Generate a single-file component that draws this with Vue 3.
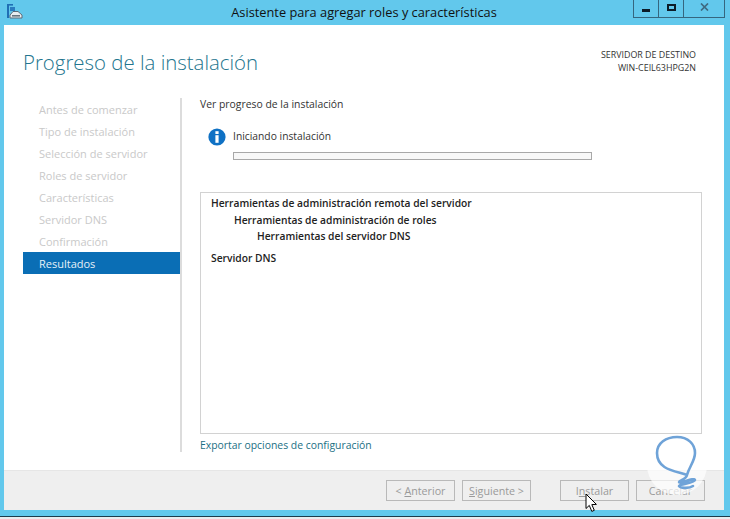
<script setup>
const steps = ['Antes de comenzar','Tipo de instalación','Selección de servidor','Roles de servidor','Características','Servidor DNS','Confirmación']
</script>

<template>
  <div class="screen">
    <div class="frame">
      <header class="titlebar">
        <svg class="appicon" width="16" height="18" viewBox="0 0 16 18">
          <rect x="0" y="0" width="6" height="1.6" fill="#1f6fb5"/>
          <rect x="0" y="0" width="2" height="14" fill="#1f6fb5"/>
          <rect x="3" y="3" width="5" height="4" fill="#2a7cc0"/>
          <path d="M3 11 L6 7.5 H11 L15 11 V14 H3 Z" fill="#e8edf0" stroke="#5c6b78" stroke-width="1"/>
          <rect x="5" y="11" width="8" height="1.6" fill="#66747f"/>
        </svg>
        <div class="title">Asistente para agregar roles y características</div>
        <div class="winbtns">
          <div class="wb"><span class="min"></span></div>
          <div class="wb"><span class="max"></span></div>
          <div class="wb close">
            <svg width="9" height="8" viewBox="0 0 9 8"><path d="M1 0.5 L8 7.5 M8 0.5 L1 7.5" stroke="#3f6a80" stroke-width="1.7"/></svg>
          </div>
        </div>
      </header>

      <div class="window">
        <div class="head">
          <h1>Progreso de la instalación</h1>
          <div class="server">
            <div>SERVIDOR DE DESTINO</div>
            <div>WIN-CEIL63HPG2N</div>
          </div>
        </div>

        <div class="body">
          <nav class="nav">
            <div v-for="s in steps" :key="s" class="step">{{ s }}</div>
            <div class="step active">Resultados</div>
          </nav>
          <main class="main">
            <div class="lead">Ver progreso de la instalación</div>
            <div class="status">
              <svg class="info" width="18" height="18" viewBox="0 0 18 18">
                <circle cx="9" cy="9" r="8.6" fill="#0f71c4"/>
                <rect x="7.4" y="3.2" width="3.2" height="2.8" fill="#fff"/>
                <rect x="7.4" y="7.2" width="3.2" height="7.6" fill="#fff"/>
              </svg>
              <div class="statusbody">
                <div class="statustext">Iniciando instalación</div>
                <div class="progress"></div>
              </div>
            </div>
            <div class="results">
              <div class="r l0">Herramientas de administración remota del servidor</div>
              <div class="r l1">Herramientas de administración de roles</div>
              <div class="r l2">Herramientas del servidor DNS</div>
              <div class="r l0 gap">Servidor DNS</div>
            </div>
            <a class="export">Exportar opciones de configuración</a>
          </main>
        </div>

        <footer class="footer">
          <button class="btn"><span>&lt; <u>A</u>nterior</span></button>
          <button class="btn"><span><u>S</u>iguiente &gt;</span></button>
          <button class="btn install"><span>I<u>n</u>stalar</span></button>
          <button class="btn"><span>Cancelar</span></button>
        </footer>
      </div>
    </div>

    <svg class="logo" width="62" height="62" viewBox="0 0 62 62">
      <circle cx="31" cy="31" r="30" fill="#ffffff" fill-opacity="0.68"/>
      <path d="M41 41 C30 37 11 36 11 19 C11 9 20 3 31 3 C42 3 49 10 49 19 C49 27 43 33 41 41 C40 46 33 46 33 48 C33 50 49 43 49 46 C49 49 33 50 33 52 C35 55 44 54 47 52" fill="none" stroke="#6fa3d8" stroke-width="2.6" stroke-linecap="round" stroke-linejoin="round"/>
    </svg>

    <svg class="cursor" width="13" height="20" viewBox="0 0 13 20">
      <path d="M1 1 V15.5 L4.3 12.4 L6.8 18.4 L9.3 17.3 L6.8 11.6 L11.4 11.4 Z" fill="#fff" stroke="#000" stroke-width="1"/>
    </svg>
  </div>
</template>

<style>
html, body { margin: 0; background: #fff; }
</style>

<style scoped>
.screen {
  position: relative;
  width: 730px;
  height: 519px;
  overflow: hidden;
  font-family: "Open Sans", "Noto Sans", sans-serif;
  background: #e9edef;
}
.frame {
  height: 517px;
  box-sizing: border-box;
  background: #62c8ec;
  border-bottom: 1px solid #1d3a4a;
  padding: 0 6px 6px 4px;
  display: flex;
  flex-direction: column;
}
.titlebar {
  height: 25px;
  flex: none;
  display: flex;
  align-items: flex-start;
  position: relative;
}
.appicon { position: absolute; left: 3px; top: 4px; }
.title {
  width: 100%;
  text-align: center;
  font-size: 12.8px;
  line-height: 24px;
  color: #111;
}
.winbtns {
  position: absolute;
  right: -1px;
  top: 0;
  display: flex;
  height: 17px;
  border: 1px solid #35667f;
  border-top: none;
}
.wb {
  width: 24px;
  height: 17px;
  display: flex;
  align-items: center;
  justify-content: center;
  border-right: 1px solid #35667f;
}
.wb.close { width: 40px; border-right: none; }
.min { width: 8px; height: 3px; background: #0c1c28; margin-top: 4px; }
.max { width: 5px; height: 3px; border: 2px solid #0c1c28; margin-top: -2px; }
.close svg { margin-top: -3px; }

.window {
  flex: 1;
  min-height: 0;
  background: #fff;
  display: flex;
  flex-direction: column;
}
.head {
  height: 73px;
  flex: none;
  display: flex;
  justify-content: space-between;
  padding: 0 28px 0 19px;
}
h1 {
  margin: 22px 0 0;
  font-size: 20.4px;
  font-weight: 300;
  line-height: 30px;
  color: #23758e;
}
.server {
  margin-top: 24px;
  text-align: right;
  font-size: 8.9px;
  line-height: 12.5px;
  color: #333;
}
.body {
  flex: 1;
  min-height: 0;
  display: flex;
  padding-left: 19px;
}
.nav {
  width: 157px;
  flex: none;
}
.step {
  height: 22px;
  line-height: 23px;
  padding-left: 16px;
  font-size: 11px;
  color: #c9c9c9;
}
.step.active {
  background: #0a6eb5;
  color: #e6f1f8;
}
.main {
  flex: 1;
  margin-bottom: 18px;
  border-left: 2px solid #dcdcdc;
  padding-left: 18px;
  padding-right: 22px;
  display: flex;
  flex-direction: column;
}
.lead {
  font-size: 10.4px;
  line-height: 13px;
  color: #333;
}
.status {
  display: flex;
  margin-top: 17px;
  margin-left: 8px;
  height: 64px;
  flex: none;
}
.info { flex: none; }
.statusbody { margin-left: 7px; }
.statustext {
  font-size: 10.3px;
  line-height: 16px;
  color: #333;
}
.progress {
  margin-top: 8px;
  width: 359px;
  height: 8px;
  box-sizing: border-box;
  border: 1px solid #a8a8a8;
  background: #f8f8f8;
}
.results {
  flex: 1;
  min-height: 0;
  border: 1px solid #d2d2d2;
  padding: 2px 10px;
  box-sizing: border-box;
}
.r {
  font-size: 10.25px;
  font-weight: 600;
  line-height: 16.6px;
  color: #222;
}
.l1 { padding-left: 23px; }
.l2 { padding-left: 46px; }
.gap { margin-top: 5px; }
.export {
  font-size: 10.4px;
  line-height: 14px;
  margin-top: 4px;
  color: #1b6f84;
}
.footer {
  height: 40px;
  flex: none;
  box-sizing: border-box;
  background: #efefef;
  border-top: 1px solid #e6e6e6;
  display: flex;
  align-items: flex-start;
  padding: 9px 0 0 382px;
}
.btn {
  width: 69px;
  height: 21px;
  margin-right: 7px;
  padding: 0;
  font-family: inherit;
  font-size: 10.7px;
  color: #9a9a9a;
  background: #efefef;
  border: 1px solid #b9b9b9;
}
.install { margin-left: 22px; }
.logo { position: absolute; left: 646px; top: 434px; }
.cursor { position: absolute; left: 585px; top: 493px; }
</style>
